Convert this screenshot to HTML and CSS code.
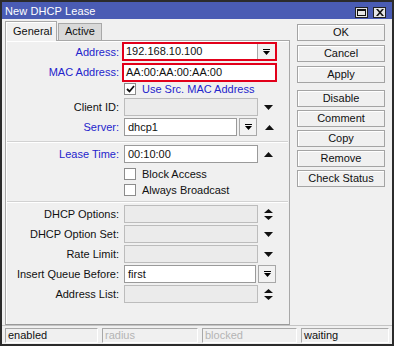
FILE: index.html
```html
<!DOCTYPE html>
<html lang="en">
<head>
    <meta charset="UTF-8">
    <title>New DHCP Lease</title>
    <link rel="stylesheet" href="styles.css">
</head>
<body>
    <div class="window">
        <div class="titlebar">
            <span class="title">New DHCP Lease</span>
            <div class="title-btns">
                <span class="tbtn"><svg width="9" height="7" viewBox="0 0 9 7"><path d="M0 0h9v7H0zM1 2v4h7V2z" fill="#111"/></svg></span>
                <span class="tbtn"><svg width="8" height="7" viewBox="0 0 8 7"><path d="M0 0h2l2 2.2L6 0h2L5 3.5 8 7H6L4 4.8 2 7H0l3-3.5z" fill="#111"/></svg></span>
            </div>
        </div>

        <div class="main">
            <div class="left">
                <div class="tabs">
                    <span class="tab active">General</span>
                    <span class="tab">Active</span>
                </div>
                <div class="panel">
                    <div class="row first">
                        <span class="label blue">Address:</span>
                        <div class="redbox">
                            <span class="field plain">192.168.10.100</span>
                            <span class="dd-btn inbox"><svg width="7" height="6" viewBox="0 0 7 6"><path d="M0 0h7v1H0zM0 2h7L3.5 6z"/></svg></span>
                        </div>
                    </div>
                    <div class="row">
                        <span class="label blue">MAC Address:</span>
                        <div class="redbox">
                            <span class="field plain wide">AA:00:AA:00:AA:00</span>
                        </div>
                    </div>
                    <div class="check-row src">
                        <span class="checkbox"><svg width="9" height="8" viewBox="0 0 9 8"><path d="M1 4l2.5 2.5L8 1" fill="none" stroke="#111" stroke-width="1.8"/></svg></span>
                        <span class="check-text blue">Use Src. MAC Address</span>
                    </div>
                    <div class="row">
                        <span class="label">Client ID:</span>
                        <span class="field"></span>
                        <svg class="arrow" width="9" height="5" viewBox="0 0 9 5"><path d="M0 0h9L4.5 5z"/></svg>
                    </div>
                    <div class="row">
                        <span class="label blue">Server:</span>
                        <span class="field white short">dhcp1</span>
                        <span class="dd-btn"><svg width="7" height="6" viewBox="0 0 7 6"><path d="M0 0h7v1H0zM0 2h7L3.5 6z"/></svg></span>
                        <svg class="arrow after-btn" width="9" height="5" viewBox="0 0 9 5"><path d="M0 5h9L4.5 0z"/></svg>
                    </div>
                    <div class="sep first-sep"></div>
                    <div class="row">
                        <span class="label blue">Lease Time:</span>
                        <span class="field white">00:10:00</span>
                        <svg class="arrow" width="9" height="5" viewBox="0 0 9 5"><path d="M0 5h9L4.5 0z"/></svg>
                    </div>
                    <div class="check-row block">
                        <span class="checkbox"></span>
                        <span class="check-text">Block Access</span>
                    </div>
                    <div class="check-row">
                        <span class="checkbox"></span>
                        <span class="check-text">Always Broadcast</span>
                    </div>
                    <div class="sep second-sep"></div>
                    <div class="row">
                        <span class="label">DHCP Options:</span>
                        <span class="field"></span>
                        <svg class="arrow" width="9" height="11" viewBox="0 0 9 11"><path d="M0 4h9L4.5 0zM0 7h9L4.5 11z"/></svg>
                    </div>
                    <div class="row">
                        <span class="label">DHCP Option Set:</span>
                        <span class="field"></span>
                        <svg class="arrow" width="9" height="5" viewBox="0 0 9 5"><path d="M0 0h9L4.5 5z"/></svg>
                    </div>
                    <div class="row">
                        <span class="label">Rate Limit:</span>
                        <span class="field"></span>
                        <svg class="arrow" width="9" height="5" viewBox="0 0 9 5"><path d="M0 0h9L4.5 5z"/></svg>
                    </div>
                    <div class="row">
                        <span class="label">Insert Queue Before:</span>
                        <span class="field white queue">first</span>
                        <span class="dd-btn"><svg width="7" height="6" viewBox="0 0 7 6"><path d="M0 0h7v1H0zM0 2h7L3.5 6z"/></svg></span>
                    </div>
                    <div class="row">
                        <span class="label">Address List:</span>
                        <span class="field"></span>
                        <svg class="arrow" width="9" height="11" viewBox="0 0 9 11"><path d="M0 4h9L4.5 0zM0 7h9L4.5 11z"/></svg>
                    </div>
                </div>
            </div>

            <div class="buttons">
                <span class="btn">OK</span>
                <span class="btn">Cancel</span>
                <span class="btn">Apply</span>
                <span class="btn group">Disable</span>
                <span class="btn tight">Comment</span>
                <span class="btn tight">Copy</span>
                <span class="btn tight">Remove</span>
                <span class="btn tight">Check Status</span>
            </div>
        </div>

        <div class="statusbar">
            <span class="seg s1">enabled</span>
            <span class="seg s2 dim">radius</span>
            <span class="seg s3 dim">blocked</span>
            <span class="seg s4">waiting</span>
        </div>
    </div>
</body>
</html>
```

FILE: styles.css
```css
* {
    box-sizing: border-box;
}

body {
    margin: 0;
    font-family: "Liberation Sans", Arial, sans-serif;
    font-size: 11px;
    color: #111;
    background: #fff;
}

.window {
    width: 394px;
    height: 346px;
    border: 2px solid #2b2b2b;
    background: #f0f0f0;
    display: flex;
    flex-direction: column;
}

.titlebar {
    height: 17px;
    background: #4a5cb4;
    color: #fff;
    display: flex;
    align-items: center;
    justify-content: space-between;
    padding: 0 6px 0 3px;
}

.title {
    font-size: 11px;
    letter-spacing: 0.1px;
}

.title-btns {
    display: flex;
    gap: 5px;
    padding-top: 3px;
}

.tbtn {
    width: 13px;
    height: 11px;
    border: 1px solid #222;
    background: #e6e6e6;
    display: flex;
    align-items: center;
    justify-content: center;
}

.main {
    display: flex;
    flex: 1;
}

.left {
    width: 288px;
    padding: 2px 0 0 3px;
    display: flex;
    flex-direction: column;
}

.tabs {
    display: flex;
    align-items: flex-end;
    height: 19px;
}

.tab {
    height: 17px;
    line-height: 15px;
    padding: 0 6px;
    border: 1px solid #a8a8a8;
    border-bottom: none;
    background: #d9d9d9;
    margin-left: 1px;
    width: 44px;
}

.tab.active {
    position: relative;
    height: 20px;
    width: 52px;
    margin: 0 0 -1px 0;
    line-height: 18px;
    padding: 0 7px;
    background: #f0f0f0;
    box-shadow: inset 1px 1px #fff;
}

.panel {
    flex: 1;
    border: 1px solid #a8a8a8;
    border-bottom-color: #9a9a9a;
    box-shadow: inset 1px 1px #fff;
    padding-top: 1px;
}

.row {
    display: flex;
    align-items: center;
    height: 18px;
    margin-top: 2px;
}

.row.first {
    height: 19px;
    margin-top: 0;
}

.label {
    width: 113px;
    margin-right: 5px;
    text-align: right;
    white-space: nowrap;
}

.blue {
    color: #2424cc;
}

.field {
    width: 134px;
    height: 18px;
    line-height: 16px;
    padding: 0 3px;
    border: 1px solid #bcbcbc;
    background: #ebebeb;
    white-space: nowrap;
    overflow: hidden;
}

.field.white {
    background: #fff;
    border-color: #9a9a9a;
}

.field.short {
    width: 113px;
}

.field.queue {
    width: 132px;
}

.redbox {
    display: flex;
    width: 155px;
    height: 19px;
    margin-left: -2px;
    border: 2px solid #e2001a;
    background: #fff;
}

.field.plain {
    width: 133px;
    height: 15px;
    line-height: 15px;
    border: none;
    padding-left: 2px;
    background: #fff;
}

.field.plain.wide {
    width: 151px;
}

.dd-btn {
    width: 18px;
    height: 18px;
    margin-left: 2px;
    border: 1px solid #a8a8a8;
    background: #f2f2f2;
    display: flex;
    align-items: center;
    justify-content: center;
}

.dd-btn.inbox {
    height: 15px;
    margin-left: 1px;
    border-width: 0 0 0 1px;
}

.arrow {
    margin-left: 6px;
    fill: #111;
}

.arrow.after-btn {
    margin-left: 8px;
}

.check-row {
    display: flex;
    align-items: center;
    height: 15px;
    margin-top: 1px;
    padding-left: 118px;
}

.check-row.src {
    margin-top: 0;
}

.check-row.block {
    margin-top: 3px;
}

.checkbox {
    width: 12px;
    height: 12px;
    border: 1px solid #8c8c8c;
    background: #fff;
    display: flex;
    align-items: center;
    justify-content: center;
}

.check-text {
    margin-left: 6px;
}

.sep {
    height: 2px;
    margin: 0 1px;
    border-top: 1px solid #d2d2d2;
    border-bottom: 1px solid #fff;
}

.first-sep {
    margin-top: 5px;
    margin-bottom: 1px;
}

.second-sep {
    margin-top: 4px;
    margin-bottom: 1px;
}

.buttons {
    display: flex;
    flex-direction: column;
    padding: 5px 0 0 7px;
}

.btn {
    width: 88px;
    height: 17px;
    margin-bottom: 4px;
    line-height: 15px;
    text-align: center;
    border: 1px solid #a4a4a4;
    background: #f0f0f0;
    box-shadow: inset 1px 1px #fff;
}

.btn.group {
    margin-top: 3px;
}

.btn.tight {
    margin-top: -1px;
}

.statusbar {
    height: 19px;
    display: flex;
    gap: 4px;
    padding: 2px 0 0 3px;
    border-top: 1px solid #c4c4c4;
}

.seg {
    height: 15px;
    line-height: 13px;
    padding-left: 2px;
    border: 1px solid;
    border-color: #a8a8a8 #fff #fff #a8a8a8;
}

.seg.dim {
    color: #b4b4b4;
}

.s1 {
    width: 93px;
}

.s2 {
    width: 96px;
}

.s3 {
    width: 95px;
}

.s4 {
    width: 88px;
}
```
